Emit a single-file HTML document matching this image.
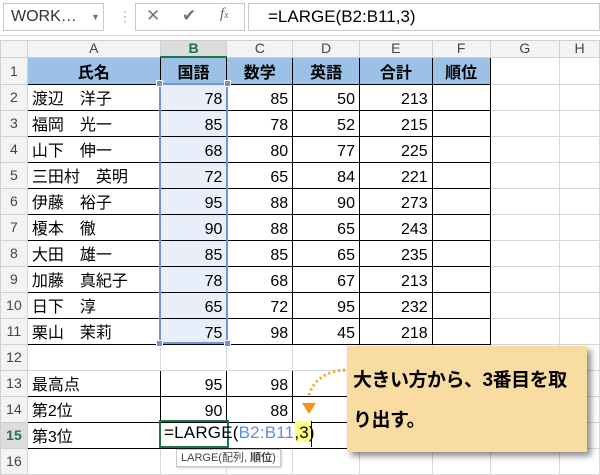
<!DOCTYPE html>
<html><head><meta charset="utf-8"><style>
*{margin:0;padding:0;box-sizing:border-box}
body{width:600px;height:471px;overflow:hidden;background:#fff;font-family:"Liberation Sans","Noto Sans CJK JP",sans-serif;position:relative}
.abs{position:absolute}
table{position:absolute;left:0;top:40px;border-collapse:collapse;table-layout:fixed}
td{border:1px solid #d8d8d8;height:26px;font-size:16px;color:#000;white-space:nowrap;overflow:visible;padding:0 4px;line-height:20px;vertical-align:bottom}
tr.h td{height:16px;background:#f3f3f3;color:#444;font-size:14px;text-align:center;line-height:15px;vertical-align:middle;border-color:#cfcfcf}
td.rh{background:#f3f3f3;color:#444;font-size:14px;text-align:center;border-color:#cfcfcf;padding:0;vertical-align:middle}
td.k{border:1px solid #000}
td.n{text-align:right}
td.hd{background:#9bc2e6;font-weight:bold;text-align:center}
td.sel{background:#e9eefb}
</style></head><body>
<div class="abs" style="left:0;top:0;width:600px;height:36px;background:#fff;border-bottom:1px solid #ddd"></div>
<div class="abs" style="left:3px;top:3px;width:101px;height:28px;border:1px solid #c8c8c8;font-size:16px;line-height:26px;padding-left:7px;color:#333">WORK…<span style="position:absolute;left:87px;top:0;font-size:9px;color:#777">▼</span></div>
<div class="abs" style="left:118px;top:8px;color:#aaa;font-size:14px">⋮</div>
<div class="abs" style="left:135px;top:3px;width:110px;height:28px;border:1px solid #c8c8c8"></div>
<div class="abs" style="left:146px;top:6px;color:#777;font-size:17px">✕</div>
<div class="abs" style="left:182px;top:6px;color:#777;font-size:17px">✔</div>
<div class="abs" style="left:220px;top:6px;color:#666;font-size:15px;font-style:italic;font-family:'Liberation Serif',serif">f<span style="font-size:10px">x</span></div>
<div class="abs" style="left:248px;top:3px;width:352px;height:28px;border:1px solid #c8c8c8;font-size:17px;line-height:26px;padding-left:19px">=LARGE(B2:B11,3)</div>

<table>
<colgroup><col style="width:27px"><col style="width:133px"><col style="width:67px"><col style="width:66px"><col style="width:67px"><col style="width:73px"><col style="width:58px"><col style="width:70px"><col style="width:40px"></colgroup>
<tr class="h"><td></td><td>A</td><td style="background:#dcdcdc;color:#217346;font-weight:bold;border-bottom:2px solid #217346">B</td><td>C</td><td>D</td><td>E</td><td>F</td><td>G</td><td>H</td></tr>
<tr><td class="rh" style="height:27px">1</td><td class="k hd">氏名</td><td class="k hd">国語</td><td class="k hd">数学</td><td class="k hd">英語</td><td class="k hd">合計</td><td class="k hd">順位</td><td></td><td></td></tr>
<tr><td class="rh">2</td><td class="k">渡辺　洋子</td><td class="k n sel">78</td><td class="k n">85</td><td class="k n">50</td><td class="k n">213</td><td class="k"></td><td></td><td></td></tr>
<tr><td class="rh">3</td><td class="k">福岡　光一</td><td class="k n sel">85</td><td class="k n">78</td><td class="k n">52</td><td class="k n">215</td><td class="k"></td><td></td><td></td></tr>
<tr><td class="rh">4</td><td class="k">山下　伸一</td><td class="k n sel">68</td><td class="k n">80</td><td class="k n">77</td><td class="k n">225</td><td class="k"></td><td></td><td></td></tr>
<tr><td class="rh">5</td><td class="k">三田村　英明</td><td class="k n sel">72</td><td class="k n">65</td><td class="k n">84</td><td class="k n">221</td><td class="k"></td><td></td><td></td></tr>
<tr><td class="rh">6</td><td class="k">伊藤　裕子</td><td class="k n sel">95</td><td class="k n">88</td><td class="k n">90</td><td class="k n">273</td><td class="k"></td><td></td><td></td></tr>
<tr><td class="rh">7</td><td class="k">榎本　徹</td><td class="k n sel">90</td><td class="k n">88</td><td class="k n">65</td><td class="k n">243</td><td class="k"></td><td></td><td></td></tr>
<tr><td class="rh">8</td><td class="k">大田　雄一</td><td class="k n sel">85</td><td class="k n">85</td><td class="k n">65</td><td class="k n">235</td><td class="k"></td><td></td><td></td></tr>
<tr><td class="rh">9</td><td class="k">加藤　真紀子</td><td class="k n sel">78</td><td class="k n">68</td><td class="k n">67</td><td class="k n">213</td><td class="k"></td><td></td><td></td></tr>
<tr><td class="rh">10</td><td class="k">日下　淳</td><td class="k n sel">65</td><td class="k n">72</td><td class="k n">95</td><td class="k n">232</td><td class="k"></td><td></td><td></td></tr>
<tr><td class="rh">11</td><td class="k">栗山　茉莉</td><td class="k n sel">75</td><td class="k n">98</td><td class="k n">45</td><td class="k n">218</td><td class="k"></td><td></td><td></td></tr>
<tr><td class="rh">12</td><td></td><td></td><td></td><td></td><td></td><td></td><td></td><td></td></tr>
<tr><td class="rh">13</td><td class="k">最高点</td><td class="k n">95</td><td class="k n">98</td><td class="k n">9</td><td></td><td></td><td></td><td></td></tr>
<tr><td class="rh">14</td><td class="k">第2位</td><td class="k n">90</td><td class="k n">88</td><td class="k n">9</td><td></td><td></td><td></td><td></td></tr>
<tr><td class="rh" style="background:#dcdcdc;color:#217346;font-weight:bold">15</td><td class="k">第3位</td><td class="k" style="border-right:none"></td><td class="k" style="border-left:none;border-right:none"></td><td class="k" style="border-left:none"></td><td></td><td></td><td></td><td></td></tr>
<tr><td class="rh">16</td><td></td><td></td><td></td><td></td><td></td><td></td><td></td><td></td></tr>
</table>
<div class="abs" style="left:159px;top:83px;width:69px;height:261px;border:2px solid #6f94dc"></div>
<div class="abs" style="left:156px;top:80px;width:7px;height:7px;background:#6f94dc;border:1px solid #fff"></div>
<div class="abs" style="left:224px;top:80px;width:7px;height:7px;background:#6f94dc;border:1px solid #fff"></div>
<div class="abs" style="left:156px;top:340px;width:7px;height:7px;background:#6f94dc;border:1px solid #fff"></div>
<div class="abs" style="left:224px;top:340px;width:7px;height:7px;background:#6f94dc;border:1px solid #fff"></div>
<div class="abs" style="left:295px;top:421px;width:17px;height:21px;background:#ffff80"></div>
<div class="abs" style="left:159px;top:420px;width:70px;height:28px;border:2px solid #217346"></div>
<div class="abs" style="left:164px;top:423px;font-size:17px;line-height:20px;letter-spacing:0.2px">=LARGE(<span style="color:#5b8ee6">B2:B11</span>,3)</div>
<div class="abs" style="left:311px;top:421px;width:1px;height:26px;background:#000"></div>
<div class="abs" style="left:176px;top:449px;height:18px;border:1px solid #c8c8c8;background:#fff;font-size:11px;line-height:16px;padding:0 4px;color:#444;box-shadow:1px 1px 2px #ccc">LARGE(配列, <b>順位</b>)</div>
<svg class="abs" style="left:295px;top:360px" width="60" height="60">
<path d="M50 10 Q20 12 13 38" fill="none" stroke="#f5a31a" stroke-width="3" stroke-dasharray="2 3"/>
<path d="M7 43 L21 43 L14 54 Z" fill="#f5931a"/>
</svg>
<div class="abs" style="left:347px;top:346px;width:240px;height:106px;background:#f9dca2;box-shadow:4px 4px 6px rgba(0,0,0,.45);font-size:19px;font-weight:bold;line-height:40px;padding:15px 0 0 6px;letter-spacing:-0.5px;white-space:nowrap">大きい方から、3番目を取<br>り出す。</div>
</body></html>
